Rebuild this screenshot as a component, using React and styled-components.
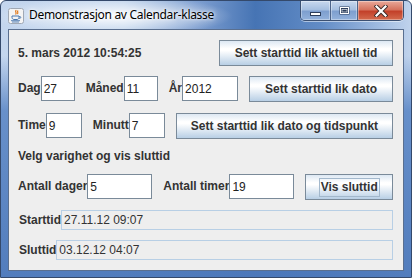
import React from 'react';
import styled, { createGlobalStyle } from 'styled-components';

const Global = createGlobalStyle`
  html, body { margin: 0; padding: 0; overflow: hidden; background: #ffffff; }
  * { box-sizing: border-box; }
`;

const Window = styled.div`
  width: 412px;
  height: 278px;
  display: flex;
  flex-direction: column;
  border: 1px solid #34496b;
  border-radius: 6px 6px 0 0;
  overflow: hidden;
  background:
    radial-gradient(ellipse 120px 20px at 112px 15px, rgba(255,255,255,0.95), rgba(255,255,255,0) 100%),
    linear-gradient(to bottom, rgba(88,132,196,0) 0px, rgba(88,132,196,0) 55px, rgba(88,132,196,0.85) 110px, rgba(76,120,186,0.95) 276px),
    linear-gradient(to right, #c4d6ee 0%, #b9cfea 30%, #7d9ed0 48%, #4674b4 62%, #628cc6 78%, #a7c1e4 94%, #c0d3ec 100%);
`;

const TitleBar = styled.div`
  height: 28px;
  display: flex;
  align-items: flex-start;
  padding: 0 7px;
`;

const AppIcon = styled.svg`
  width: 16px;
  height: 16px;
  margin-top: 7px;
  flex: none;
`;

const Title = styled.div`
  margin: 6px 0 0 5px;
  font-family: "Segoe UI", "Noto Sans", sans-serif;
  font-size: 12px;
  letter-spacing: -0.3px;
  line-height: 16px;
  color: #000;
  text-shadow: 0 0 6px #fff, 0 0 3px #fff;
  white-space: nowrap;
  flex: 1;
`;

const Caption = styled.div`
  display: flex;
  height: 20px;
  border: 1px solid #3b5072;
  border-top: none;
  border-radius: 0 0 5px 5px;
  overflow: hidden;
  box-shadow: 0 1px 0 rgba(255,255,255,0.5);
`;

const CapButton = styled.div`
  width: ${p => p.$w}px;
  height: 100%;
  display: flex;
  align-items: center;
  justify-content: center;
  border-left: ${p => (p.$first ? 'none' : '1px solid #4d6489')};
  background: ${p => p.$close
    ? 'linear-gradient(to bottom, #e9a99a 0%, #d6735e 45%, #c3412a 55%, #d36b4e 100%)'
    : 'linear-gradient(to bottom, #c8d8ee 0%, #a6bfe0 45%, #7e9fcf 55%, #93b2dc 100%)'};
  box-shadow: inset 0 0 0 1px rgba(255,255,255,0.35);
`;

const Client = styled.div`
  margin: 0 7px 6px 7px;
  flex: 1;
  border: 1px solid #5a6f8f;
  background: #eeeeee;
  padding: 10px 10px 0 9px;
  display: flex;
  flex-direction: column;
  font-family: "Liberation Sans", Arial, sans-serif;
  font-size: 12px;
  color: #333333;
`;

const Row = styled.div`
  display: flex;
  align-items: flex-start;
  gap: 11px;
  height: ${p => p.$h}px;
  margin-top: ${p => p.$mt || 0}px;
  justify-content: ${p => (p.$spread ? 'space-between' : 'flex-start')};
`;

const Group = styled.div`
  display: flex;
  align-items: center;
  height: 25px;
`;

const Label = styled.span`
  font-weight: bold;
  color: #333333;
  white-space: nowrap;
  line-height: ${p => p.$lh || 25}px;
  padding-left: ${p => p.$pl || 0}px;
`;

const Field = styled.input`
  width: ${p => p.$w}px;
  height: 25px;
  border: 1px solid #7a8a99;
  background: #ffffff;
  font-family: "Liberation Sans", Arial, sans-serif;
  font-size: 12px;
  color: #222;
  padding: 0 2px;
  margin: 0;
  outline: none;
`;

const Button = styled.button`
  width: ${p => p.$w}px;
  height: 26px;
  border: 1px solid #7a8a99;
  border-radius: 0;
  margin: 0;
  padding: 0;
  background: linear-gradient(to bottom, #dde8f3 0%, #ffffff 32%, #ffffff 40%, #b8cfe5 100%);
  font-family: "Liberation Sans", Arial, sans-serif;
  font-size: 12px;
  font-weight: bold;
  color: #333333;
  display: flex;
  align-items: center;
  justify-content: center;
`;

const FocusRing = styled.span`
  border: 1px solid #a3b8cc;
  padding: 1px 1px 2px 1px;
  line-height: 14px;
`;

const Display = styled.div`
  flex: 1;
  height: 20px;
  border: 1px solid #b8cfe5;
  padding-left: 2px;
  line-height: 18px;
  color: #333;
  white-space: nowrap;
`;

const DisplayRow = styled.div`
  display: flex;
  align-items: center;
  height: 20px;
  margin-top: 10px;
`;

export default function App() {
  return (
    <>
      <Global />
      <Window>
        <TitleBar>
          <AppIcon viewBox="0 0 16 16">
            <rect x="0.5" y="0.5" width="15" height="15" rx="2" fill="#f4f4f4" stroke="#a0a8b4" />
            <path d="M8 2.5c-1.5 1.2 1.2 2-0.2 3.5M9.8 3c-1 1 .8 1.4-.2 2.6" stroke="#e07a1f" strokeWidth="1.2" fill="none" strokeLinecap="round" />
            <path d="M4 8h7v1.5c0 1.2-1 2-2 2H6c-1 0-2-.8-2-2z" fill="none" stroke="#4a78b0" strokeWidth="1" />
            <path d="M11 8.6h1.2c.8 0 .8 1.6 0 1.6H11" fill="none" stroke="#4a78b0" strokeWidth="0.9" />
            <path d="M3 12.7h9M4 14h7" stroke="#4a78b0" strokeWidth="0.9" />
          </AppIcon>
          <Title>Demonstrasjon av Calendar-klasse</Title>
          <Caption>
            <CapButton $w={29} $first>
              <svg width="13" height="12" viewBox="0 0 13 12">
                <rect x="1.5" y="7.5" width="10" height="3" fill="#fff" stroke="#2c3e5c" />
              </svg>
            </CapButton>
            <CapButton $w={27}>
              <svg width="13" height="12" viewBox="0 0 13 12">
                <rect x="1.5" y="1.5" width="10" height="8" fill="#2c3e5c" />
                <rect x="2.5" y="2.5" width="8" height="6" fill="none" stroke="#fff" strokeWidth="1" />
                <rect x="4" y="4.5" width="5" height="2.5" fill="#2c3e5c" stroke="#fff" strokeWidth="0.6" />
              </svg>
            </CapButton>
            <CapButton $w={46} $close>
              <svg width="14" height="12" viewBox="0 0 14 12">
                <path d="M2.5 1.5L11.5 10.5M11.5 1.5L2.5 10.5" stroke="#3a2a28" strokeWidth="4" strokeLinecap="square" />
                <path d="M2.5 1.5L11.5 10.5M11.5 1.5L2.5 10.5" stroke="#ffffff" strokeWidth="2.2" strokeLinecap="square" />
              </svg>
            </CapButton>
          </Caption>
        </TitleBar>
        <Client>
          <Row $h={26} $spread>
            <Label $lh={26}>5. mars 2012 10:54:25</Label>
            <Button $w={174}>Sett starttid lik aktuell tid</Button>
          </Row>
          <Row $h={26} $mt={10}>
            <Group>
              <Label>Dag</Label>
              <Field $w={34} defaultValue="27" readOnly />
            </Group>
            <Group>
              <Label>Måned</Label>
              <Field $w={34} defaultValue="11" readOnly />
            </Group>
            <Group>
              <Label>År</Label>
              <Field $w={56} defaultValue="2012" readOnly />
            </Group>
            <Button $w={145}>Sett starttid lik dato</Button>
          </Row>
          <Row $h={26} $mt={11}>
            <Group>
              <Label>Time</Label>
              <Field $w={36} defaultValue="9" readOnly />
            </Group>
            <Group>
              <Label>Minutt</Label>
              <Field $w={36} defaultValue="7" readOnly />
            </Group>
            <Button $w={218}>Sett starttid lik dato og tidspunkt</Button>
          </Row>
          <Row $h={20} $mt={7}>
            <Label $lh={20}>Velg varighet og vis sluttid</Label>
          </Row>
          <Row $h={26} $mt={8}>
            <Group>
              <Label>Antall dager</Label>
              <Field $w={65} defaultValue="5" readOnly />
            </Group>
            <Group>
              <Label>Antall timer</Label>
              <Field $w={65} defaultValue="19" readOnly />
            </Group>
            <Button $w={90}><FocusRing>Vis sluttid</FocusRing></Button>
          </Row>
          <DisplayRow>
            <Label $lh={20} $pl={1}>Starttid</Label>
            <Display>27.11.12 09:07</Display>
          </DisplayRow>
          <DisplayRow>
            <Label $lh={20} $pl={1}>Sluttid</Label>
            <Display>03.12.12 04:07</Display>
          </DisplayRow>
        </Client>
      </Window>
    </>
  );
}
